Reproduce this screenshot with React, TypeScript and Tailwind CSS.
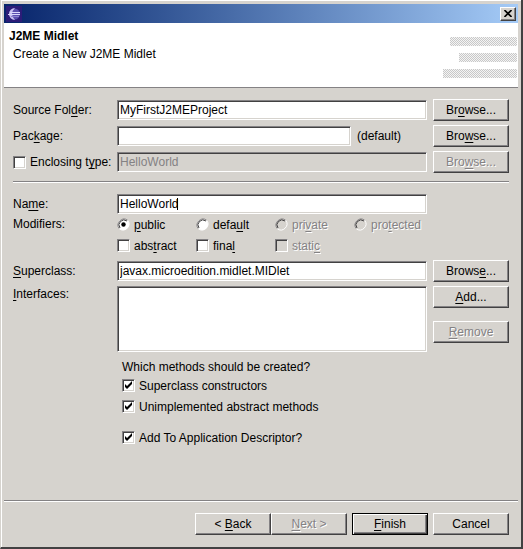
import { ReactNode } from "react";
import clsx from "clsx";

const sunken =
  "border border-t-[#848284] border-l-[#848284] border-r-white border-b-white shadow-[inset_1px_1px_0_#424142,inset_-1px_-1px_0_#d6d3ce]";
const raised =
  "border border-t-white border-l-white border-r-[#424142] border-b-[#424142] shadow-[inset_-1px_-1px_0_#848284]";
const dimmed = "text-[#848284] [text-shadow:1px_1px_0_#fff]";

interface IButtonProps {
  children: ReactNode;
  disabled?: boolean;
  primary?: boolean;
}

const Button = ({ children, disabled, primary }: IButtonProps) => (
  <button
    type="button"
    disabled={disabled}
    className={clsx(
      "h-[22px] w-[76px] shrink-0 bg-[#d6d3ce] text-center",
      primary
        ? "border border-black shadow-[inset_1px_1px_0_#fff,inset_-1px_-1px_0_#424142,inset_-2px_-2px_0_#848284]"
        : raised,
      disabled && dimmed
    )}
  >
    {children}
  </button>
);

interface IFieldProps {
  id: string;
  value?: string;
  disabled?: boolean;
}

const TextField = ({ id, value = "", disabled }: IFieldProps) => (
  <input
    id={id}
    type="text"
    defaultValue={value}
    disabled={disabled}
    className={clsx(
      "h-5 w-full min-w-0 px-[2px]",
      sunken,
      disabled ? "bg-[#d6d3ce] text-[#848284]" : "bg-white"
    )}
  />
);

interface ICheckProps {
  children: ReactNode;
  checked?: boolean;
  disabled?: boolean;
}

const Checkbox = ({ children, checked, disabled }: ICheckProps) => (
  <label className="flex h-[21px] items-center gap-1">
    <span className="grid size-[13px] shrink-0">
      <input
        type="checkbox"
        defaultChecked={checked}
        disabled={disabled}
        className={clsx(
          "peer col-start-1 row-start-1 size-[13px] appearance-none",
          sunken,
          disabled ? "bg-[#d6d3ce]" : "bg-white"
        )}
      />
      <svg
        viewBox="0 0 13 13"
        className="pointer-events-none invisible col-start-1 row-start-1 size-[13px] peer-checked:visible"
      >
        <path d="M3 5v3l2 2 5-5V2L5 7z" fill="#000" />
      </svg>
    </span>
    <span className={clsx(disabled && dimmed)}>{children}</span>
  </label>
);

const Radio = ({ children, checked, disabled }: ICheckProps) => (
  <label className="flex h-[21px] items-center gap-1">
    <span className="grid size-[13px] shrink-0">
      <input
        type="radio"
        name="visibility"
        defaultChecked={checked}
        disabled={disabled}
        className="peer col-start-1 row-start-1 size-[13px] appearance-none"
      />
      <svg
        viewBox="0 0 13 13"
        className="pointer-events-none col-start-1 row-start-1 size-[13px] peer-checked:[&>.dot]:visible"
      >
        <circle cx="6.5" cy="6.5" r="5.5" fill={disabled ? "#d6d3ce" : "#fff"} />
        <path d="M2.3 10.7A6 6 0 0 1 10.7 2.3" fill="none" stroke="#848284" />
        <path d="M10.7 2.3A6 6 0 0 1 2.3 10.7" fill="none" stroke="#fff" />
        <path d="M3 10A5 5 0 0 1 10 3" fill="none" stroke="#424142" />
        <circle className="dot invisible" cx="6.5" cy="6.5" r="2.2" fill="#000" />
      </svg>
    </span>
    <span className={clsx(disabled && dimmed)}>{children}</span>
  </label>
);

const Separator = () => (
  <hr className="h-[2px] border-0 border-t border-b border-t-[#848284] border-b-white" />
);

const EclipseIcon = () => (
  <svg viewBox="0 0 16 16" className="size-4">
    <rect width="16" height="16" fill="#2c1c78" />
    <circle cx="8.5" cy="8" r="5.5" fill="#5c50b0" />
    <path d="M9 2a6 6 0 0 0 0 12 9 9 0 0 1-3-6 9 9 0 0 1 3-6z" fill="#c8c0f0" />
    <path d="M4 6.500h10M2 8.500h12" stroke="#dcd8fc" />
    <path d="M5 10.500h8" stroke="#8c80d0" />
  </svg>
);

const TitleBar = () => (
  <div className="flex h-[19px] items-center justify-between bg-linear-to-r from-[#08246b] to-[#a5cbf7] pr-[2px] pl-[2px]">
    <EclipseIcon />
    <button
      type="button"
      aria-label="Close"
      className={clsx("grid h-[14px] w-4 place-items-center bg-[#d6d3ce]", raised)}
    >
      <svg viewBox="0 0 8 7" className="h-[7px] w-2">
        <path d="M.5 0l7 7M7.5 0l-7 7" stroke="#000" strokeWidth="1.6" />
      </svg>
    </button>
  </div>
);

const Banner = () => (
  <header className="flex h-[65px] justify-between border-b border-[#848284] bg-white">
    <div className="pt-1 pl-[5px]">
      <h1 className="leading-[18px] font-bold">J2ME Midlet</h1>
      <p className="pl-1 leading-[18px]">Create a New J2ME Midlet</p>
    </div>
    <svg viewBox="0 0 76 44" className="mt-[13px] h-11 w-[76px]">
      <defs>
        <pattern id="dither" width="2" height="2" patternUnits="userSpaceOnUse">
          <rect width="2" height="2" fill="#f4f4f4" />
          <rect width="1" height="1" fill="#c8c8c8" />
          <rect x="1" y="1" width="1" height="1" fill="#c8c8c8" />
        </pattern>
      </defs>
      <rect x="8" y="1" width="67" height="9" fill="url(#dither)" />
      <rect x="17" y="17" width="58" height="9" fill="url(#dither)" />
      <rect x="1" y="33" width="74" height="9" fill="url(#dither)" />
    </svg>
  </header>
);

const rowClass = "grid grid-cols-[104px_1fr_76px] items-center";

const App = () => {
  return (
    <div className="flex min-h-screen flex-col border-r-2 border-b-2 border-l border-[#424142] border-l-[#d6d3ce] bg-[#d6d3ce] p-[3px] pt-1 font-['Liberation_Sans',sans-serif] text-[12px] leading-4 text-black shadow-[inset_1px_1px_0_#fff] [&_u]:underline-offset-2">
      <TitleBar />
      <Banner />

      <main className="px-[9px] pt-[11px]">
        <div className="flex flex-col gap-1">
          <div className={rowClass}>
            <label htmlFor="source">
              Source Fol<u>d</u>er:
            </label>
            <div className="pr-[6px]">
              <TextField id="source" value="MyFirstJ2MEProject" />
            </div>
            <Button>
              Br<u>o</u>wse...
            </Button>
          </div>
          <div className={rowClass}>
            <label htmlFor="package">
              Pac<u>k</u>age:
            </label>
            <div className="flex items-center gap-[6px] pr-[6px]">
              <TextField id="package" />
              <span className="w-[70px] shrink-0">(default)</span>
            </div>
            <Button>
              Bro<u>w</u>se...
            </Button>
          </div>
          <div className={rowClass}>
            <Checkbox>
              Enclosing t<u>y</u>pe:
            </Checkbox>
            <div className="pr-[6px]">
              <TextField id="enclosing" value="HelloWorld" disabled />
            </div>
            <Button disabled>
              Bro<u>w</u>se...
            </Button>
          </div>
        </div>

        <div className="pt-2 pb-[11px]">
          <Separator />
        </div>

        <div className={rowClass}>
          <label htmlFor="name">
            Na<u>m</u>e:
          </label>
          <div className="relative pr-[6px]">
            <TextField id="name" value="HelloWorld" />
            <span className="absolute top-1 left-[60px] h-3 w-px bg-black" />
          </div>
        </div>

        <fieldset className="grid grid-cols-[104px_1fr]">
          <legend className="float-left h-[21px] leading-[21px]">Modifiers:</legend>
          <div className="col-start-2 grid grid-cols-[79px_79px_79px_auto]">
            <Radio checked>
              <u>p</u>ublic
            </Radio>
            <Radio>
              defa<u>u</u>lt
            </Radio>
            <Radio disabled>
              pri<u>v</u>ate
            </Radio>
            <Radio disabled>
              pro<u>t</u>ected
            </Radio>
            <Checkbox>
              abs<u>t</u>ract
            </Checkbox>
            <Checkbox>
              fina<u>l</u>
            </Checkbox>
            <Checkbox disabled>
              stati<u>c</u>
            </Checkbox>
          </div>
        </fieldset>

        <div className="flex flex-col gap-1 pt-1">
          <div className={rowClass}>
            <label htmlFor="superclass">
              <u>S</u>uperclass:
            </label>
            <div className="pr-[6px]">
              <TextField id="superclass" value="javax.microedition.midlet.MIDlet" />
            </div>
            <Button>
              Brows<u>e</u>...
            </Button>
          </div>
          <div className="grid grid-cols-[104px_1fr_76px]">
            <label htmlFor="interfaces">
              <u>I</u>nterfaces:
            </label>
            <div className="flex pr-[6px]">
              <textarea
                id="interfaces"
                className={clsx("h-[66px] w-full resize-none bg-white", sunken)}
              />
            </div>
            <div className="flex flex-col gap-[13px]">
              <Button>
                <u>A</u>dd...
              </Button>
              <Button disabled>
                <u>R</u>emove
              </Button>
            </div>
          </div>
        </div>

        <div className="pt-[7px] pl-[109px]">
          <p>Which methods should be created?</p>
          <Checkbox checked>Superclass constructors</Checkbox>
          <Checkbox checked>Unimplemented abstract methods</Checkbox>
          <div className="pt-[10px]">
            <Checkbox checked>Add To Application Descriptor?</Checkbox>
          </div>
        </div>
      </main>

      <footer className="mt-auto">
        <Separator />
        <div className="flex justify-end gap-[5px] pt-[11px] pr-[9px] pb-[9px]">
          <div className="flex">
            <Button>
              &lt; <u>B</u>ack
            </Button>
            <Button disabled>
              <u>N</u>ext &gt;
            </Button>
          </div>
          <Button primary>
            <u>F</u>inish
          </Button>
          <Button>Cancel</Button>
        </div>
      </footer>
    </div>
  );
};

export default App;
